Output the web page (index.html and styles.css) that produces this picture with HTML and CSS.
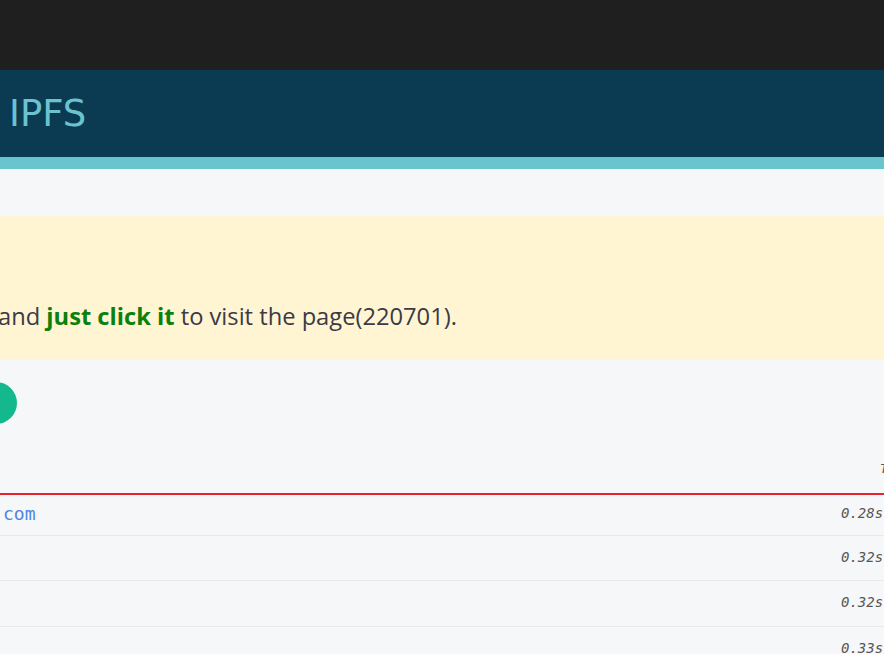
FILE: index.html
```html
<!DOCTYPE html>
<html lang="en">
<head>
<meta charset="utf-8">
<title>IPFS</title>
<link rel="stylesheet" href="styles.css">
</head>
<body>
<div class="topbar"></div>
<header class="header">
  <h1 class="brand">IPFS</h1>
</header>
<div class="strip"></div>
<main class="main">
  <section class="notice">
    <p class="notice-text">and <strong class="hl">just click it</strong> to visit the page(220701).</p>
  </section>
  <div class="actions">
    <button class="btn" type="button"></button>
  </div>
  <table class="list">
    <thead>
      <tr><th class="c-host"></th><th class="c-time">T</th></tr>
    </thead>
    <tbody>
      <tr class="first"><td class="c-host"><a class="host" href="#">com</a></td><td class="c-time">0.28s</td></tr>
      <tr><td class="c-host"></td><td class="c-time">0.32s</td></tr>
      <tr><td class="c-host"></td><td class="c-time">0.32s</td></tr>
      <tr><td class="c-host"></td><td class="c-time">0.33s</td></tr>
    </tbody>
  </table>
</main>
</body>
</html>
```
FILE: styles.css
```css
html, body {
  margin: 0;
  padding: 0;
  overflow: hidden;
  background: #f6f7f9;
}
body {
  width: 884px;
  height: 654px;
  font-family: "Open Sans", "DejaVu Sans", sans-serif;
}
.topbar {
  height: 70px;
  background: #1f1f1f;
}
.header {
  height: 87px;
  background: #0b3b53;
  display: flex;
  align-items: center;
  padding-left: 9px;
}
.brand {
  margin: 0;
  font-family: "DejaVu Sans", sans-serif;
  font-weight: normal;
  font-size: 37px;
  color: #6cc3cd;
  line-height: 1;
}
.strip {
  height: 12px;
  background: #68c4cd;
}
.main {
  padding-top: 47px;
}
.notice {
  height: 144px;
  background: #fff5d2;
  display: flex;
  flex-direction: column;
  justify-content: flex-end;
  padding-bottom: 28px;
  box-sizing: border-box;
}
.notice-text {
  margin: 0 0 0 -2px;
  font-size: 23.7px;
  line-height: 32px;
  color: #3a3a48;
  white-space: nowrap;
}
.hl {
  color: #0b800b;
  font-weight: 700;
}
.actions {
  height: 85px;
  display: flex;
  align-items: center;
}
.btn {
  width: 60px;
  height: 42px;
  margin-left: -43px;
  border: 0;
  border-radius: 21px;
  background: #14b88d;
}
.list {
  width: 920px;
  border-collapse: collapse;
  font-family: "DejaVu Sans Mono", monospace;
}
.list th {
  height: 47px;
  border-bottom: 2px solid #e6232b;
  font-weight: normal;
  font-style: italic;
  font-size: 13px;
  color: #6b5030;
  padding: 0 0 1px 0;
  vertical-align: middle;
  text-align: left;
}
.list th.c-time {
  text-indent: 39px;
}
.list td {
  height: 45.5px;
  border-bottom: 1px solid #e8eaed;
  padding: 0 0 2px 0;
  box-sizing: border-box;
}
.list tr.first td {
  height: 41px;
  padding-bottom: 3px;
}
.list td.c-host {
  padding-left: 3px;
}
.c-time {
  width: 79px;
  font-style: italic;
  font-size: 14px;
  color: #555;
}
.host {
  color: #4f86e0;
  text-decoration: none;
  font-size: 18px;
}
```
